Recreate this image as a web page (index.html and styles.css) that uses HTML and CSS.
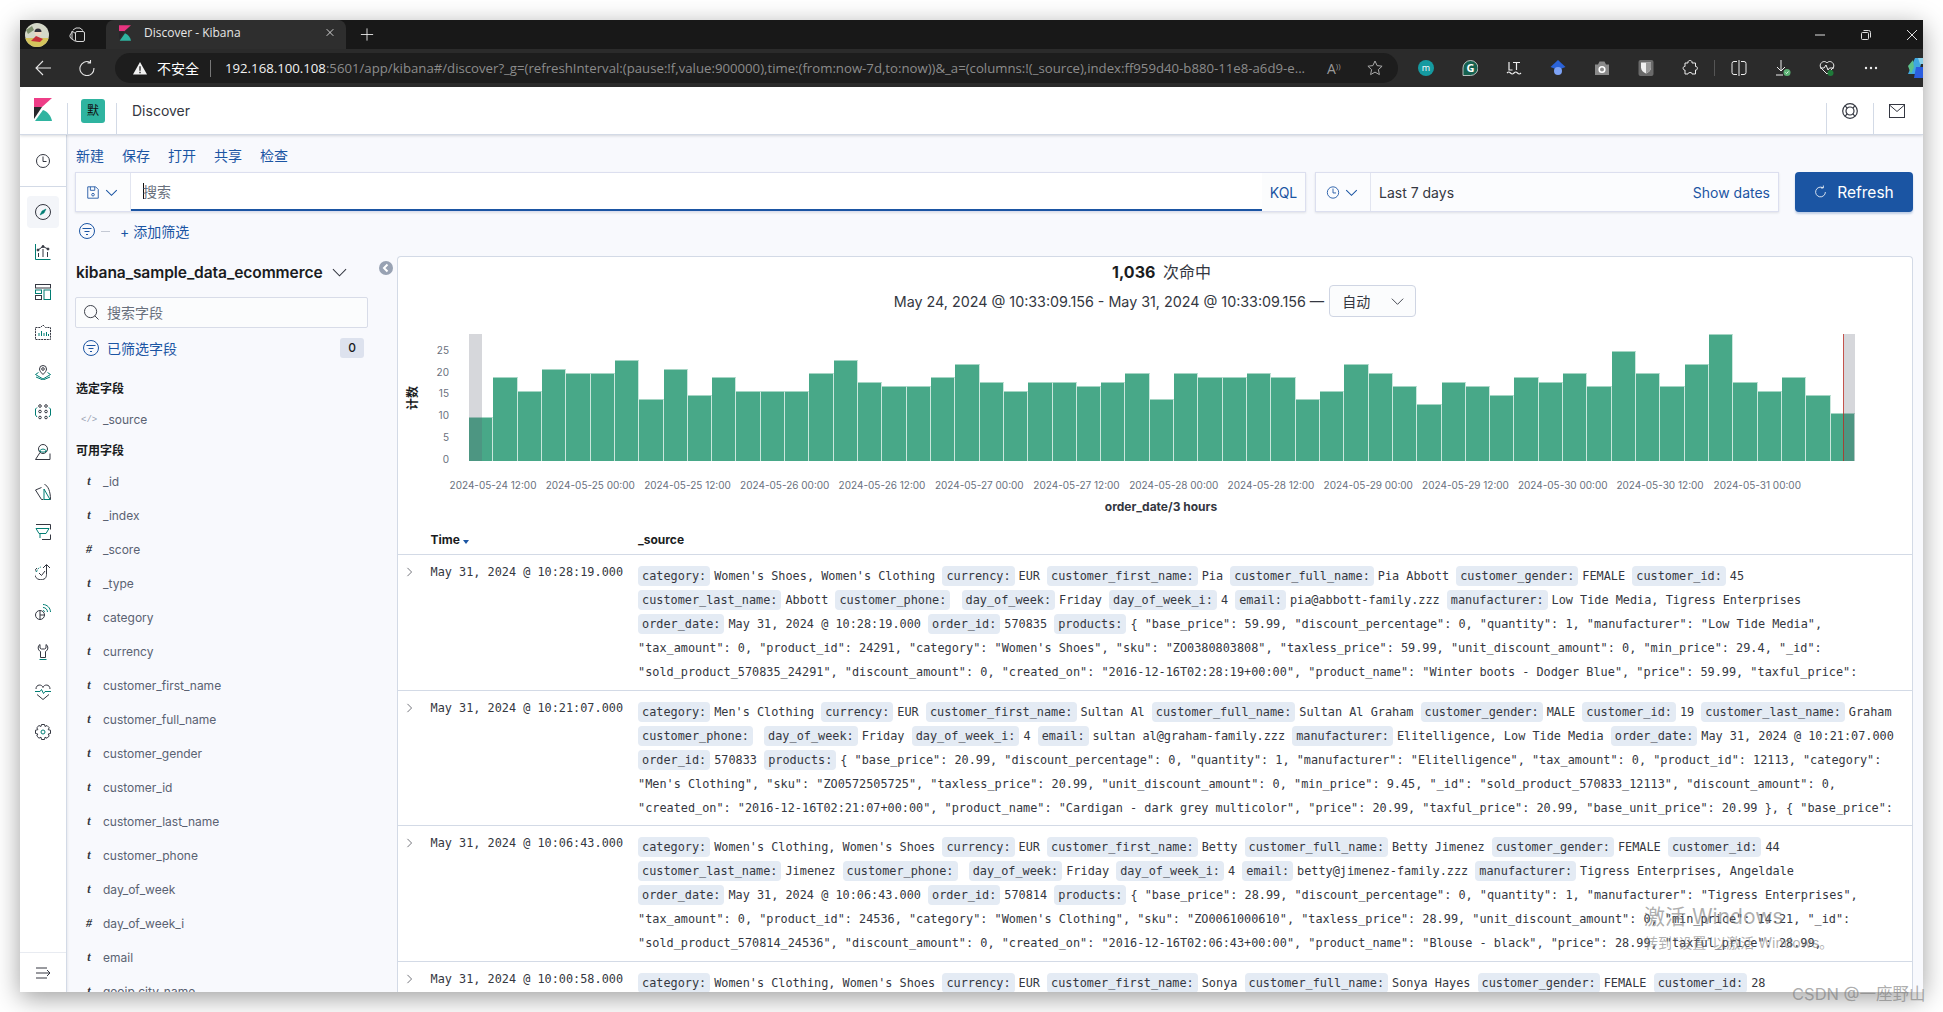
FILE: index.html
```html
<!DOCTYPE html>
<html lang="zh">
<head>
<meta charset="utf-8">
<title>Discover - Kibana</title>
<link rel="stylesheet" href="styles.css">
</head>
<body>
<div class="window">
  <div class="tabstrip">
    <svg class="avatar" viewBox="0 0 24 24"><defs><clipPath id="av"><ellipse cx="12" cy="12" rx="12" ry="12"/></clipPath></defs><g clip-path="url(#av)"><rect width="24" height="24" fill="#d4d8c8"/><rect y="15" width="24" height="9" fill="#d4c45c"/><circle cx="13" cy="9" r="3.500" fill="#f0d6c0"/><path d="M13 5.500a3.500 3.500 0 0 1 3.500 3.500h-7a3.500 3.500 0 0 1 3.500-3.500z" fill="#30303a"/><path d="M6 18l5-5 7 3-3 3z" fill="#c62f3a"/><path d="M1 7l6-4 2 4-6 4z" fill="#7d8f6c"/></g></svg>
    <svg class="tsicon" viewBox="0 0 16 16" fill="none" stroke="#d8d8d8"><rect x="6.500" y="4.500" width="9" height="10" rx="1.500"/><path d="M6.500 14.500L3 12V4l3.500 2.500M3.500 4.500L1 8v2l2 2.500M4 3l3-2h4l3 2.500"/></svg>
    <div class="tab">
      <svg class="favicon" viewBox="0 0 18 23"><polygon points="0,0 18,0 8,9 0,9" fill="#e8347f"/><polygon points="0,9 8,9 0,21" fill="#27282b"/><path d="M9 12C14 14 17 18 18 23H1z" fill="#2fb4a0"/></svg>
      <span class="tabtitle">Discover - Kibana</span>
      <svg class="tabclose" viewBox="0 0 12 12" stroke="#eee" fill="none"><path d="M2 2l8 8M10 2l-8 8"/></svg>
    </div>
    <svg class="newtab" viewBox="0 0 16 16" stroke="#eee" fill="none"><path d="M8 1v14M1 8h14"/></svg>
    <div class="winctl">
      <svg viewBox="0 0 12 12" stroke="#ddd" fill="none"><path d="M1 6h10"/></svg>
      <svg viewBox="0 0 12 12" stroke="#ddd" fill="none"><rect x="1.500" y="3.500" width="7" height="7" rx="1"/><path d="M3.500 1.500h5a2 2 0 0 1 2 2v5"/></svg>
      <svg viewBox="0 0 12 12" stroke="#ddd" fill="none"><path d="M1 1l10 10M11 1L1 11"/></svg>
    </div>
  </div>
  <div class="toolbar">
    <svg class="navbtn" viewBox="0 0 16 16" fill="none" stroke="#e6e6e6" stroke-width="1.100"><path d="M16 8H1M8 1L1 8l7 7"/></svg>
    <svg class="navbtn" viewBox="0 0 16 16" fill="none" stroke="#e6e6e6" stroke-width="1.100"><path d="M11 2.300A7 7 0 1 0 14.900 8M11.500 0v3h-3"/></svg>
    <div class="addr">
      <svg class="warn" viewBox="0 0 16 16"><path d="M8 1l7.500 13.500H.5z" fill="#f2f2f2"/><path d="M7.300 5.500h1.400v5H7.300zM7.300 11.500h1.400v1.500H7.300z" fill="#222"/></svg>
      <span class="insecure">不安全</span>
      <span class="addrsep"></span>
      <span class="url"><b>192.168.100.108</b>:5601/app/kibana#/discover?_g=(refreshInterval:(pause:!f,value:900000),time:(from:now-7d,to:now))&amp;_a=(columns:!(_source),index:ff959d40-b880-11e8-a6d9-e...</span>
      <span class="readaloud">A<small>))</small></span>
      <svg class="star" viewBox="0 0 16 16" fill="none" stroke="#aaa"><path d="M8 1l2.100 4.600 5 .6-3.700 3.400 1 5L8 12.100l-4.400 2.500 1-5L.9 6.200l5-.6z"/></svg>
    </div>
    <div class="exts">
      <span class="ext"><svg viewBox="0 0 16 16"><circle cx="8" cy="8" r="8" fill="#159aa0"/><text x="8" y="11" class="extm">m</text></svg></span>
      <span class="ext"><svg viewBox="0 0 16 16"><path d="M8.500 .5a7.500 7.500 0 0 1 0 15H1V8A7.500 7.500 0 0 1 8.500 .5z" fill="#15614f" stroke="#ddd" stroke-width=".8"/><text x="8.500" y="12" class="extg">G</text></svg></span>
      <span class="ext"><svg viewBox="0 0 16 16" fill="none" stroke="#eee" stroke-width="1.200"><path d="M3 2v8h3.500M7 2.500h7M10.500 2.500v7.500M1 13c1.500-1.500 2-1.500 3.500 0s2 1.500 3.500 0 2-1.500 3.500 0 2 1.500 3.500 0"/></svg></span>
      <span class="ext"><svg viewBox="0 0 16 16"><path d="M8 0l7.500 7L8 10 .5 7z" fill="#2b63d9"/><circle cx="8" cy="11" r="4" fill="#7da2f5"/></svg></span>
      <span class="ext"><svg viewBox="0 0 16 16"><path d="M1 4.500h3l1.500-3h5L12 4.500h3V15H1z" fill="#8a8a8a"/><circle cx="8" cy="9.500" r="2.800" fill="none" stroke="#fff" stroke-width="1.600"/></svg></span>
      <span class="ext"><svg viewBox="0 0 16 16"><rect x="0.500" y="0" width="15" height="16" rx="2" fill="#6a6a6a"/><path d="M3 2.500h10v5c0 3-2.500 5-5 6-2.500-1-5-3-5-6z" fill="#f0f0f0"/><path d="M8 2.500h5v5c0 3-2.500 5-5 6z" fill="#9a9a9a"/></svg></span>
      <span class="ext"><svg viewBox="0 0 16 16" fill="none" stroke="#eee"><path d="M6 2c0-2 4-2 4 0v1h3.500v3.500c2.500-.5 2.500 4 0 3.500v4H10c.5-2-4-2-4 0H3v-4C.5 10.500.5 6 3 6.500V3h3z"/></svg></span>
      <span class="extsep"></span>
      <span class="ext"><svg viewBox="0 0 16 16" fill="none" stroke="#eee"><path d="M6 1.500H3a2 2 0 0 0-2 2v9a2 2 0 0 0 2 2h3M10 1.500h3a2 2 0 0 1 2 2v9a2 2 0 0 1-2 2h-3M8 0v16"/></svg></span>
      <span class="ext"><svg viewBox="0 0 16 16" fill="none"><path d="M6 0v11M2 7l4 4 4-4M1 15h7" stroke="#eee"/><circle cx="12" cy="12.500" r="3.500" fill="#5cb274"/><path d="M10.500 12.500l1 1 2-2" stroke="#fff" stroke-width=".8"/></svg></span>
      <span class="ext"><svg viewBox="0 0 16 16" fill="none"><path d="M8 14L2 8C-1 4 5-1 8 3c3-4 9 1 6 5z" stroke="#eee"/><path d="M1 8h4l2-3 2 5 1.500-2H15" stroke="#eee"/><circle cx="11.500" cy="13" r="3" fill="#1f7a3a"/></svg></span>
      <span class="ext"><svg viewBox="0 0 16 16" fill="#eee"><circle cx="3" cy="8" r="1.200"/><circle cx="8" cy="8" r="1.200"/><circle cx="13" cy="8" r="1.200"/></svg></span>
      <span class="ext copilot"><svg viewBox="0 0 22 20"><path d="M8 0h8l-5 16H1z" fill="#3fa7e0"/><path d="M11 0h6l2 6-6 0z" fill="#8ad0e8"/><path d="M9 9h9l4 2-5 9H7z" fill="#2b5ee0"/><path d="M1 8l5-6 1 7-3 7z" fill="#5cc18a"/></svg></span>
    </div>
  </div>

  <header class="kbnhead">
    <div class="kbnlogo">
      <svg viewBox="0 0 18 23"><polygon points="0,0 18,0 8,9 0,9" fill="#ee3d87"/><polygon points="0,9 8,9 0,21" fill="#27282b"/><path d="M9 12C14 14 17 18 18 23H1z" fill="#2fb4a0"/></svg>
    </div>
    <div class="kbnspace"><span class="spacebadge">默</span></div>
    <div class="kbncrumb">Discover</div>
    <div class="kbnhelp">
      <svg viewBox="0 0 16 16" fill="none" stroke="#343741" stroke-width="1.200"><circle cx="8" cy="8" r="7.300"/><circle cx="8" cy="8" r="4"/><path d="M3 2.500l2.200 2.800M13 2.500l-2.200 2.800M3 13.500l2.200-2.800M13 13.500l-2.200-2.800"/></svg>
    </div>
    <div class="kbnmail">
      <svg viewBox="0 0 16 16" fill="none" stroke="#343741"><rect x=".5" y="1.500" width="15" height="13"/><path d="M.5 2L8 8.500 15.500 2"/></svg>
    </div>
  </header>

  <div class="kbnbody">
    <nav class="sidenav">
      <div class="navitem recent"><svg viewBox="0 0 16 16" fill="none" stroke="#343741"><circle cx="8" cy="8" r="6.500"/><path d="M8 3.500V8.500H11.500"/></svg></div>
      <div class="navitem active"><svg viewBox="0 0 16 16" fill="none" stroke="#343741"><circle cx="8" cy="8" r="7.500"/><path d="M11 5L9 9 5 11l2-4z" fill="#017d73" stroke="#017d73" stroke-width=".5"/></svg></div>
      <div class="navitem"><svg viewBox="0 0 16 16" fill="none" stroke="#343741"><path d="M.5 0v15.500" stroke="#017d73"/><path d="M.5 15.500h15" stroke="#017d73"/><path d="M3.500 13V9M8 13V5M12.500 13V8"/><path d="M3 6l5-3.500L13 5"/><circle cx="3" cy="6" r="1" fill="#343741"/><circle cx="8" cy="2.500" r="1" fill="#343741"/><circle cx="13" cy="5" r="1" fill="#343741"/></svg></div>
      <div class="navitem"><svg viewBox="0 0 16 16" fill="none" stroke="#343741"><rect x=".5" y=".5" width="15" height="3.500"/><rect x=".5" y="6" width="6" height="3.500" stroke="#017d73"/><rect x=".5" y="11.500" width="6" height="4"/><rect x="9" y="6" width="6.500" height="9.500" stroke="#017d73"/></svg></div>
      <div class="navitem"><svg viewBox="0 0 16 16" fill="none" stroke="#343741"><path d="M.5 3.500h5L8 1l2.500 2.500h5v12H.5z" stroke-dasharray="2 .8"/><path d="M4 12V9M6.500 12V7M9 12V9M11.500 12V8M13.500 12v-2" stroke="#017d73"/></svg></div>
      <div class="navitem"><svg viewBox="0 0 16 16" fill="none" stroke="#343741"><path d="M8 10.500C5.500 8 4.500 6.500 4.500 5a3.500 3.500 0 0 1 7 0c0 1.500-1 3-3.500 5.500z"/><circle cx="8" cy="5" r="1.300"/><path d="M3.500 8.500L0.500 10.500 8 15l7.500-4.500-3-2M1 13l7 3 7-3" stroke="#017d73"/></svg></div>
      <div class="navitem"><svg viewBox="0 0 16 16" fill="none" stroke="#343741"><circle cx="5" cy="2" r="1.300"/><circle cx="11" cy="2" r="1.300"/><circle cx="5" cy="7.500" r="1.300"/><circle cx="11" cy="7.500" r="1.300"/><circle cx="5" cy="13.500" r="1.300"/><circle cx="11" cy="13.500" r="1.300"/><path d="M2 3.500L.5 5v6L2 13M14 3.500L15.500 5v6L14 13" stroke="#017d73"/></svg></div>
      <div class="navitem"><svg viewBox="0 0 16 16" fill="none" stroke="#343741"><circle cx="8" cy="5" r="4.500"/><path d="M5 8.500L.5 15.500h14.500v-6"/><path d="M4.500 7c2-2.500 5-2.500 7 0-2 1.500-5 1.500-7 0z" stroke="#017d73"/></svg></div>
      <div class="navitem"><svg viewBox="0 0 16 16" fill="none" stroke="#343741"><path d="M.5 6L6.500 3.500M.5 6l6 9.500h2M9.500 .5c3.500 1 6 7 6 15H9.500"/><path d="M9 5l6 10.500H9z" stroke="#017d73"/></svg></div>
      <div class="navitem"><svg viewBox="0 0 16 16" fill="none" stroke="#343741"><path d="M1 .5h14.500v5M7 15.500h8.500v-5"/><path d="M1 4.500h13L11 9.500H4zM5 10v4" stroke="#017d73"/></svg></div>
      <div class="navitem"><svg viewBox="0 0 16 16" fill="none" stroke="#343741"><path d="M2 4a6.500 6.500 0 1 0 8 10.500c1-1 1.500-2.500 1.500-4V1"/><path d="M8 4l3.500-3.500L15 4"/><path d="M1.500 8A6.500 6.500 0 0 1 6 3" stroke="#017d73" stroke-dasharray="2 1"/><path d="M4 9l2.500 2.500L10 7"/></svg></div>
      <div class="navitem"><svg viewBox="0 0 16 16" fill="none" stroke="#343741"><circle cx="5" cy="11" r="4.500"/><path d="M5 6.500V11h4.500M5 11v4.500"/><path d="M8 .5c4 0 7.500 3.500 7.500 7.500M8 3.500c2.500 0 4.500 2 4.500 4.500M8 6.500c1 0 1.500.5 1.500 1.500" stroke="#017d73"/></svg></div>
      <div class="navitem"><svg viewBox="0 0 16 16" fill="none" stroke="#343741"><path d="M5 .5C2.500 2 2.500 6 5.500 7.500v6h5v-6C13.500 6 13.500 2 11 .5v3.500L9.500 5h-3L5 4z"/><path d="M4.500 15.500h7" stroke="#017d73"/></svg></div>
      <div class="navitem"><svg viewBox="0 0 16 16" fill="none" stroke="#343741"><path d="M1 5c0-5 6-5 7-1.500C9 0 15 0 15 5M2 10.500l6 5 6-5"/><path d="M0 7.500h5l1.500-2 2 4 1.500-2h6" stroke="#017d73"/></svg></div>
      <div class="navitem"><svg viewBox="0 0 16 16" fill="none" stroke="#343741"><path d="M6.500.5h3l.5 2 2-1 2.200 2.200-1 2 2.300.5v3.300l-2.300.5 1 2-2.200 2.200-2-1-.5 2.300h-3l-.5-2.300-2 1-2.200-2.200 1-2L.5 9.500V6.200l2.300-.5-1-2L4 1.500l2 1z"/><circle cx="8" cy="8" r="2" stroke="#017d73"/></svg></div>
      <div class="navfoot"><svg viewBox="0 0 16 16" fill="none" stroke="#343741"><path d="M1 3h11M1 8h14M1 13h11M12 5l3 3-3 3"/></svg></div>
    </nav>

    <main class="content">
      <div class="topmenu"><span>新建</span><span>保存</span><span>打开</span><span>共享</span><span>检查</span></div>
      <div class="querybar">
        <div class="query">
          <div class="qprepend">
            <svg viewBox="0 0 16 16" fill="none" stroke="#1b55a3"><path d="M2 1.500h9l3 3v10H2z"/><path d="M5 1.500v4h5v-4"/><circle cx="8" cy="10.500" r="1.500"/></svg>
            <svg class="chev" viewBox="0 0 16 16" fill="none" stroke="#1b55a3" stroke-width="1.300"><path d="M1.500 5l6.500 6.500L14.500 5"/></svg>
          </div>
          <div class="qinput"><i class="caret"></i><span>搜索</span></div>
          <div class="qlang">KQL</div>
        </div>
        <div class="datepicker">
          <div class="qprepend">
            <svg viewBox="0 0 16 16" fill="none" stroke="#1b55a3"><circle cx="8" cy="8" r="6.500"/><path d="M8 3.500V8.500H11.500"/></svg>
            <svg class="chev" viewBox="0 0 16 16" fill="none" stroke="#1b55a3" stroke-width="1.300"><path d="M1.500 5l6.500 6.500L14.500 5"/></svg>
          </div>
          <div class="dateval">Last 7 days</div>
          <div class="showdates">Show dates</div>
        </div>
        <button class="refresh"><svg viewBox="0 0 16 16" fill="none" stroke="#fff"><path d="M11 2.800A6 6 0 1 0 14 8M11.500 0v3h-3"/></svg>Refresh</button>
      </div>
      <div class="filterbar">
        <svg viewBox="0 0 16 16" fill="none" stroke="#1b55a3"><circle cx="8" cy="8" r="7.500"/><path d="M3.500 5.500h9M5.500 8.500h5M7 11.500h2"/></svg>
        <i class="filterdash"></i>
        <span>+ 添加筛选</span>
      </div>

      <div class="discover">
        <aside class="fields">
          <div class="indexrow">
            <span class="indexname">kibana_sample_data_ecommerce</span>
            <svg class="indexchev" viewBox="0 0 16 16" fill="none" stroke="#343741" stroke-width="1.100"><path d="M1 4.500l7 7 7-7"/></svg>
            <span class="collapse"><svg viewBox="0 0 14 14" fill="none" stroke="#fff" stroke-width="2"><path d="M8.500 3.500L5 7l3.500 3.500"/></svg></span>
          </div>
          <div class="fieldsearch">
            <svg viewBox="0 0 16 16" fill="none" stroke="#343741"><circle cx="7" cy="7" r="6.500"/><path d="M11.500 11.500l4 4"/></svg>
            <span>搜索字段</span>
          </div>
          <div class="filterfields">
            <svg viewBox="0 0 16 16" fill="none" stroke="#1b55a3"><circle cx="8" cy="8" r="7.500"/><path d="M3.500 5.500h9M5.500 8.500h5M7 11.500h2"/></svg>
            <span class="ffl">已筛选字段</span>
            <span class="ffbadge">0</span>
          </div>
          <h3 class="fhead first">选定字段</h3>
          <div class="field src"><span class="ftype code">&lt;/&gt;</span>_source</div>
          <h3 class="fhead second">可用字段</h3>
          <div class="fieldlist">
            <div class="field"><span class="ftype">t</span>_id</div>
            <div class="field"><span class="ftype">t</span>_index</div>
            <div class="field"><span class="ftype">#</span>_score</div>
            <div class="field"><span class="ftype">t</span>_type</div>
            <div class="field"><span class="ftype">t</span>category</div>
            <div class="field"><span class="ftype">t</span>currency</div>
            <div class="field"><span class="ftype">t</span>customer_first_name</div>
            <div class="field"><span class="ftype">t</span>customer_full_name</div>
            <div class="field"><span class="ftype">t</span>customer_gender</div>
            <div class="field"><span class="ftype">t</span>customer_id</div>
            <div class="field"><span class="ftype">t</span>customer_last_name</div>
            <div class="field"><span class="ftype">t</span>customer_phone</div>
            <div class="field"><span class="ftype">t</span>day_of_week</div>
            <div class="field"><span class="ftype">#</span>day_of_week_i</div>
            <div class="field"><span class="ftype">t</span>email</div>
            <div class="field"><span class="ftype">t</span>geoip.city_name</div>
          </div>
        </aside>

        <section class="results">
          <div class="hits"><b>1,036</b> 次命中</div>
          <div class="timerange">
            <span>May 24, 2024 @ 10:33:09.156 - May 31, 2024 @ 10:33:09.156 —</span>
            <span class="interval">自动<svg viewBox="0 0 16 16" fill="none" stroke="#343741" stroke-width="1.100"><path d="M1 4.500l7 7 7-7"/></svg></span>
          </div>
          <div class="chart">
            <div class="yaxis">
              <span class="ytitle">计数</span>
              <div class="yticks"><span>0</span><span>5</span><span>10</span><span>15</span><span>20</span><span>25</span></div>
            </div>
            <div class="plot">
              <i style="height:44px"></i><i style="height:83.600px"></i><i style="height:70.400px"></i><i style="height:92.400px"></i><i style="height:88px"></i><i style="height:88px"></i><i style="height:101.200px"></i><i style="height:61.600px"></i><i style="height:92.400px"></i><i style="height:66px"></i><i style="height:83.600px"></i><i style="height:70.400px"></i><i style="height:70.400px"></i><i style="height:70.400px"></i><i style="height:88px"></i><i style="height:101.200px"></i><i style="height:79.200px"></i><i style="height:74.800px"></i><i style="height:74.800px"></i><i style="height:83.600px"></i><i style="height:96.800px"></i><i style="height:79.200px"></i><i style="height:70.400px"></i><i style="height:79.200px"></i><i style="height:79.200px"></i><i style="height:74.800px"></i><i style="height:79.200px"></i><i style="height:88px"></i><i style="height:61.600px"></i><i style="height:88px"></i><i style="height:83.600px"></i><i style="height:83.600px"></i><i style="height:88px"></i><i style="height:83.600px"></i><i style="height:61.600px"></i><i style="height:70.400px"></i><i style="height:96.800px"></i><i style="height:88px"></i><i style="height:74.800px"></i><i style="height:57.200px"></i><i style="height:79.200px"></i><i style="height:74.800px"></i><i style="height:66px"></i><i style="height:83.600px"></i><i style="height:79.200px"></i><i style="height:88px"></i><i style="height:74.800px"></i><i style="height:110px"></i><i style="height:88px"></i><i style="height:74.800px"></i><i style="height:96.800px"></i><i style="height:127px"></i><i style="height:79.200px"></i><i style="height:70.400px"></i><i style="height:83.600px"></i><i style="height:66px"></i><i style="height:48.400px"></i>
              <b class="bound left"></b>
              <b class="bound right"></b>
              <b class="nowline"></b>
            </div>
            <div class="xticks"><span>2024-05-24 12:00</span><span>2024-05-25 00:00</span><span>2024-05-25 12:00</span><span>2024-05-26 00:00</span><span>2024-05-26 12:00</span><span>2024-05-27 00:00</span><span>2024-05-27 12:00</span><span>2024-05-28 00:00</span><span>2024-05-28 12:00</span><span>2024-05-29 00:00</span><span>2024-05-29 12:00</span><span>2024-05-30 00:00</span><span>2024-05-30 12:00</span><span>2024-05-31 00:00</span></div>
            <div class="xtitle">order_date/3 hours</div>
          </div>
          <div class="thead"><span class="thtime">Time<i class="sortarrow"></i></span><span class="thsrc">_source</span></div>

          <article class="row">
            <svg class="expand" viewBox="0 0 16 16" fill="none" stroke="#343741"><path d="M5 2l6 6-6 6"/></svg>
            <div class="rtime">May 31, 2024 @ 10:28:19.000</div>
            <div class="src">
              <div><span class="k">category:</span><span class="v">Women's Shoes, Women's Clothing</span> <span class="k">currency:</span><span class="v">EUR</span> <span class="k">customer_first_name:</span><span class="v">Pia</span> <span class="k">customer_full_name:</span><span class="v">Pia Abbott</span> <span class="k">customer_gender:</span><span class="v">FEMALE</span> <span class="k">customer_id:</span><span class="v">45</span></div>
              <div><span class="k">customer_last_name:</span><span class="v">Abbott</span> <span class="k">customer_phone:</span><span class="v"></span> <span class="k">day_of_week:</span><span class="v">Friday</span> <span class="k">day_of_week_i:</span><span class="v">4</span> <span class="k">email:</span><span class="v">pia@abbott-family.zzz</span> <span class="k">manufacturer:</span><span class="v">Low Tide Media, Tigress Enterprises</span></div>
              <div><span class="k">order_date:</span><span class="v">May 31, 2024 @ 10:28:19.000</span> <span class="k">order_id:</span><span class="v">570835</span> <span class="k">products:</span><span class="v">{ "base_price": 59.99, "discount_percentage": 0, "quantity": 1, "manufacturer": "Low Tide Media",</span></div>
              <div>"tax_amount": 0, "product_id": 24291, "category": "Women's Shoes", "sku": "ZO0380803808", "taxless_price": 59.99, "unit_discount_amount": 0, "min_price": 29.4, "_id":</div>
              <div>"sold_product_570835_24291", "discount_amount": 0, "created_on": "2016-12-16T02:28:19+00:00", "product_name": "Winter boots - Dodger Blue", "price": 59.99, "taxful_price":</div>
            </div>
          </article>
          <article class="row">
            <svg class="expand" viewBox="0 0 16 16" fill="none" stroke="#343741"><path d="M5 2l6 6-6 6"/></svg>
            <div class="rtime">May 31, 2024 @ 10:21:07.000</div>
            <div class="src">
              <div><span class="k">category:</span><span class="v">Men's Clothing</span> <span class="k">currency:</span><span class="v">EUR</span> <span class="k">customer_first_name:</span><span class="v">Sultan Al</span> <span class="k">customer_full_name:</span><span class="v">Sultan Al Graham</span> <span class="k">customer_gender:</span><span class="v">MALE</span> <span class="k">customer_id:</span><span class="v">19</span> <span class="k">customer_last_name:</span><span class="v">Graham</span></div>
              <div><span class="k">customer_phone:</span><span class="v"></span> <span class="k">day_of_week:</span><span class="v">Friday</span> <span class="k">day_of_week_i:</span><span class="v">4</span> <span class="k">email:</span><span class="v">sultan al@graham-family.zzz</span> <span class="k">manufacturer:</span><span class="v">Elitelligence, Low Tide Media</span> <span class="k">order_date:</span><span class="v">May 31, 2024 @ 10:21:07.000</span></div>
              <div><span class="k">order_id:</span><span class="v">570833</span> <span class="k">products:</span><span class="v">{ "base_price": 20.99, "discount_percentage": 0, "quantity": 1, "manufacturer": "Elitelligence", "tax_amount": 0, "product_id": 12113, "category":</span></div>
              <div>"Men's Clothing", "sku": "ZO0572505725", "taxless_price": 20.99, "unit_discount_amount": 0, "min_price": 9.45, "_id": "sold_product_570833_12113", "discount_amount": 0,</div>
              <div>"created_on": "2016-12-16T02:21:07+00:00", "product_name": "Cardigan - dark grey multicolor", "price": 20.99, "taxful_price": 20.99, "base_unit_price": 20.99 }, { "base_price":</div>
            </div>
          </article>
          <article class="row">
            <svg class="expand" viewBox="0 0 16 16" fill="none" stroke="#343741"><path d="M5 2l6 6-6 6"/></svg>
            <div class="rtime">May 31, 2024 @ 10:06:43.000</div>
            <div class="src">
              <div><span class="k">category:</span><span class="v">Women's Clothing, Women's Shoes</span> <span class="k">currency:</span><span class="v">EUR</span> <span class="k">customer_first_name:</span><span class="v">Betty</span> <span class="k">customer_full_name:</span><span class="v">Betty Jimenez</span> <span class="k">customer_gender:</span><span class="v">FEMALE</span> <span class="k">customer_id:</span><span class="v">44</span></div>
              <div><span class="k">customer_last_name:</span><span class="v">Jimenez</span> <span class="k">customer_phone:</span><span class="v"></span> <span class="k">day_of_week:</span><span class="v">Friday</span> <span class="k">day_of_week_i:</span><span class="v">4</span> <span class="k">email:</span><span class="v">betty@jimenez-family.zzz</span> <span class="k">manufacturer:</span><span class="v">Tigress Enterprises, Angeldale</span></div>
              <div><span class="k">order_date:</span><span class="v">May 31, 2024 @ 10:06:43.000</span> <span class="k">order_id:</span><span class="v">570814</span> <span class="k">products:</span><span class="v">{ "base_price": 28.99, "discount_percentage": 0, "quantity": 1, "manufacturer": "Tigress Enterprises",</span></div>
              <div>"tax_amount": 0, "product_id": 24536, "category": "Women's Clothing", "sku": "ZO0061000610", "taxless_price": 28.99, "unit_discount_amount": 0, "min_price": 14.21, "_id":</div>
              <div>"sold_product_570814_24536", "discount_amount": 0, "created_on": "2016-12-16T02:06:43+00:00", "product_name": "Blouse - black", "price": 28.99, "taxful_price": 28.99,</div>
            </div>
          </article>
          <article class="row">
            <svg class="expand" viewBox="0 0 16 16" fill="none" stroke="#343741"><path d="M5 2l6 6-6 6"/></svg>
            <div class="rtime">May 31, 2024 @ 10:00:58.000</div>
            <div class="src">
              <div><span class="k">category:</span><span class="v">Women's Clothing, Women's Shoes</span> <span class="k">currency:</span><span class="v">EUR</span> <span class="k">customer_first_name:</span><span class="v">Sonya</span> <span class="k">customer_full_name:</span><span class="v">Sonya Hayes</span> <span class="k">customer_gender:</span><span class="v">FEMALE</span> <span class="k">customer_id:</span><span class="v">28</span></div>
            </div>
          </article>
        </section>
      </div>
    </main>
  </div>
</div>
<div class="activate"><div class="act1">激活 Windows</div><div class="act2">转到“设置”以激活 Windows。</div></div>
<div class="csdn">CSDN @一座野山</div>
</body>
</html>
```

FILE: styles.css
```css
* { box-sizing: border-box; }
html, body { margin: 0; padding: 0; }
body {
  width: 1943px;
  height: 1012px;
  overflow: hidden;
  background: #fff;
  position: relative;
  font-family: Inter, "Noto Sans CJK SC", sans-serif;
  color: #343741;
}
svg { display: block; flex: none; }
i, b.bound, b.nowline { display: block; }

.window {
  position: absolute;
  left: 20px;
  top: 20px;
  width: 1903px;
  height: 972px;
  display: flex;
  flex-direction: column;
  overflow: hidden;
  background: #fff;
}
body::before {
  content: "";
  position: absolute;
  left: 20px;
  top: 20px;
  width: 1903px;
  height: 972px;
  box-shadow: 0 6px 24px rgba(0,0,0,.38);
}

/* browser chrome */
.tabstrip {
  height: 29px;
  flex: none;
  background: #181818;
  display: flex;
  align-items: center;
  padding-left: 5px;
}
.avatar { width: 24px; height: 26px; }
.tsicon { width: 16px; height: 18px; margin-left: 20px; }
.tab {
  width: 240px;
  height: 29px;
  margin-left: 21px;
  background: #2e2e2e;
  border-radius: 8px 8px 0 0;
  display: flex;
  align-items: center;
  padding: 0 0 4px 13px;
  color: #e6e6e6;
  font: 12px "Open Sans", "Noto Sans CJK SC", sans-serif;
}
.favicon { width: 12px; height: 16px; }
.tabtitle { margin-left: 13px; width: 181px; white-space: nowrap; }
.tabclose { width: 10px; height: 11px; }
.newtab { width: 14px; height: 15px; margin-left: 14px; }
.winctl { margin-left: auto; display: flex; align-items: center; }
.winctl svg { width: 12px; height: 12px; margin-right: 34px; }
.winctl svg:last-child { margin-right: 5px; }

.toolbar {
  height: 38px;
  flex: none;
  background: #2b2b2b;
  display: flex;
  align-items: center;
  padding-left: 15px;
}
.navbtn { width: 16px; height: 16px; margin-right: 28px; }
.navbtn + .navbtn { margin-right: 20px; }
.addr {
  width: 1283px;
  height: 30px;
  background: #1d1d1d;
  border-radius: 15px;
  display: flex;
  align-items: center;
  padding-left: 17px;
  flex: none;
  color: #fff;
  font: 13.200px "Open Sans", "Noto Sans CJK SC", sans-serif;
}
.warn { width: 16px; height: 15px; }
.insecure { margin-left: 9px; width: 43px; font-size: 14px; white-space: nowrap; }
.addrsep { width: 1px; height: 17px; background: #777; margin-left: 10px; }
.url {
  margin-left: 14px;
  width: 1090px;
  white-space: nowrap;
  color: #8c8c8c;
}
.url b { color: #f2f2f2; font-weight: 400; }
.readaloud { margin-left: 12px; color: #9a9a9a; font-size: 14px; width: 20px; white-space: nowrap; }
.readaloud small { font-size: 8px; vertical-align: 5px; }
.star { width: 16px; height: 16px; margin-left: 20px; }
.exts { display: flex; align-items: center; margin-left: 6px; }
.ext { width: 44px; display: flex; justify-content: center; }
.ext svg { width: 16px; height: 16px; }
.extm { font: 9px "Open Sans", sans-serif; fill: #fff; text-anchor: middle; }
.extg { font: bold 11px "Open Sans", sans-serif; fill: #fff; text-anchor: middle; }
.extsep { width: 1px; height: 16px; background: #555; margin: 0 2px 0 2px; }
.copilot { width: 36px; justify-content: flex-end; }
.copilot svg { width: 22px; height: 20px; }

/* kibana header */
.kbnhead {
  height: 48px;
  flex: none;
  display: flex;
  background: #fff;
  position: relative;
  z-index: 2;
  border-bottom: 1px solid #d3dae6;
  box-shadow: 0 1px 3px rgba(52,55,65,.18);
  border-radius: 5px 5px 0 0;
}
.kbnlogo {
  width: 47px;
  padding: 11px 0 0 14px;
}
.kbnlogo svg { width: 18px; height: 23px; }
.kbnspace {
  width: 49px;
  padding-left: 13px;
  border-left: 1px solid #d3dae6;
  margin-top: 16px;
  height: 31px;
}
.spacebadge {
  display: block;
  width: 24px;
  height: 24px;
  margin-top: -4px;
  background: #2fb4a0;
  border-radius: 3px;
  color: #111;
  font-size: 12px;
  line-height: 24px;
  text-align: center;
}
.kbncrumb {
  flex: 1;
  border-left: 1px solid #d3dae6;
  margin-top: 16px;
  padding-left: 15px;
  font-size: 14px;
  line-height: 16px;
}
.kbnhelp, .kbnmail {
  border-left: 1px solid #d3dae6;
  margin-top: 16px;
  width: 47px;
  display: flex;
  justify-content: center;
}
.kbnhelp svg, .kbnmail svg { width: 16px; height: 16px; }
.kbnmail { width: 50px; padding-right: 3px; }

.kbnbody { flex: 1; min-height: 0; display: flex; }

/* side nav */
.sidenav {
  width: 47px;
  flex: none;
  background: #fff;
  border-right: 1px solid #d3dae6;
  box-shadow: 1px 0 2px rgba(52,55,65,.08);
  position: relative;
  padding-top: 6px;
  display: flex;
  flex-direction: column;
  z-index: 1;
}
.navitem {
  height: 40px;
  display: flex;
  align-items: center;
  justify-content: center;
  flex: none;
}
.navitem svg { width: 16px; height: 16px; }
.navitem.recent { height: 46px; padding-bottom: 6px; border-bottom: 1px solid #d3dae6; }
.navitem.active { height: 32px; margin: 9px 7px 4px 7px; background: #f3f5f9; border-radius: 4px; }
.navfoot {
  margin-top: auto;
  height: 40px;
  border-top: 1px solid #e8ebf1;
  display: flex;
  align-items: center;
  justify-content: center;
}
.navfoot svg { width: 16px; height: 16px; }

/* content */
.content {
  flex: 1;
  min-width: 0;
  background: #f8f9fd;
  display: flex;
  flex-direction: column;
}
.topmenu {
  height: 37px;
  flex: none;
  padding: 9px 0 0 9px;
  display: flex;
  gap: 18px;
  font-size: 14px;
  line-height: 24px;
  color: #1b55a3;
}
.querybar {
  height: 40px;
  flex: none;
  margin: 0 10px 0 8px;
  display: flex;
}
.query {
  width: 1231px;
  display: flex;
  background: #fbfcfd;
  border: 1px solid #dcdfef;
  box-shadow: 0 1px 2px rgba(52,55,65,.12);
}
.qprepend {
  width: 55px;
  flex: none;
  display: flex;
  align-items: center;
  padding-left: 10px;
  gap: 5px;
  color: #1b55a3;
  border-right: 1px solid #e2e5f0;
}
.qprepend svg { width: 14px; height: 15px; }
.qprepend svg.chev { width: 13px; height: 13px; }
.qinput {
  flex: 1;
  background: #fff;
  border-bottom: 2px solid #1b55a3;
  display: flex;
  align-items: center;
  padding-left: 12px;
  font-size: 14px;
  color: #69707d;
}
.caret { width: 1px; height: 16px; background: #111; margin-right: -1px; }
.qlang {
  width: 43px;
  flex: none;
  display: flex;
  align-items: center;
  justify-content: center;
  font-size: 14px;
  color: #1b55a3;
}
.datepicker {
  width: 464px;
  margin-left: 9px;
  display: flex;
  background: #fbfcfe;
  border: 1px solid #dcdfef;
  box-shadow: 0 1px 2px rgba(52,55,65,.12);
  align-items: stretch;
}
.dateval {
  flex: 1;
  padding-left: 8px;
  display: flex;
  align-items: center;
  font-size: 14px;
  color: #343741;
}
.showdates {
  display: flex;
  align-items: center;
  font-size: 14px;
  color: #1b55a3;
  padding-right: 8px;
}
.refresh {
  width: 118px;
  margin-left: 16px;
  background: #1b55a3;
  border: 0;
  border-radius: 4px;
  color: #fff;
  font: 400 15.500px Inter, sans-serif;
  display: flex;
  align-items: center;
  justify-content: center;
  gap: 10px;
  padding: 0;
  box-shadow: 0 2px 2px rgba(27,85,163,.25);
}
.refresh svg { width: 13px; height: 14px; }
.filterbar {
  height: 44px;
  flex: none;
  padding: 0 0 6px 12px;
  display: flex;
  align-items: center;
  font-size: 14px;
  color: #1b55a3;
}
.filterbar svg { width: 16px; height: 16px; }
.filterdash { width: 9px; height: 1px; background: #c4c9d4; margin: 0 10px 0 6px; }

.discover { flex: 1; min-height: 0; display: flex; overflow: hidden; }

/* fields sidebar */
.fields { width: 330px; flex: none; padding: 4px 4px 0 8px; overflow: hidden; }
.indexrow { height: 24px; display: flex; align-items: center; padding-left: 1px; }
.indexname { font-size: 15.600px; font-weight: 600; color: #1a1c21; white-space: nowrap; letter-spacing: -.1px; }
.indexchev { width: 15px; height: 15px; margin-left: 9px; }
.collapse {
  margin-left: auto;
  width: 14px;
  height: 14px;
  margin-top: -8px;
  border-radius: 50%;
  background: #98a2b3;
}
.collapse svg { width: 14px; height: 14px; }
.fieldsearch {
  margin: 13px 25px 0 0;
  height: 31px;
  background: #fbfcfd;
  border: 1px solid #d8dce8;
  border-radius: 2px;
  display: flex;
  align-items: center;
  padding: 0 0 1px 8px;
  font-size: 14px;
  color: #69707d;
}
.fieldsearch svg { width: 15px; height: 15px; margin-right: 8px; }
.filterfields {
  height: 40px;
  display: flex;
  align-items: center;
  padding: 0 29px 0 8px;
  font-size: 14px;
  color: #1b55a3;
}
.filterfields svg { width: 16px; height: 16px; margin-right: 8px; }
.ffbadge {
  margin-left: auto;
  width: 24px;
  height: 20px;
  background: #dde2ee;
  border-radius: 3px;
  text-align: center;
  line-height: 20px;
  font-size: 12px;
  font-weight: 500;
  color: #1a1c21;
}
.fhead {
  margin: 0;
  padding-left: 1px;
  font-size: 12px;
  line-height: 16px;
  font-weight: 700;
  color: #1a1c21;
}
.fhead.first { margin-top: 12.500px; }
.fhead.second { margin-top: 6px; }
.field {
  height: 34px;
  display: flex;
  align-items: center;
  padding-left: 6px;
  font-size: 12px;
  color: #5a6272;
  white-space: nowrap;
}
.field.src { margin-top: 6px; }
.fieldlist { margin-top: 6px; }
.ftype {
  width: 22px;
  flex: none;
  text-align: center;
  padding-right: 6px;
  font: italic 700 12px "Liberation Serif", serif;
  color: #343741;
}
.ftype.code { font: 9px "Liberation Mono", monospace; color: #98a2b3; }

/* results */
.results {
  flex: 1;
  min-width: 0;
  margin-right: 10px;
  background: #fff;
  border: 1px solid #d3dae6;
  border-bottom: 0;
  border-radius: 4px 4px 0 0;
  overflow: hidden;
}
.hits {
  margin-top: 4px;
  height: 22px;
  line-height: 22px;
  text-align: center;
  padding-left: 13px;
  font-size: 16px;
  color: #343741;
}
.hits b { font-weight: 700; color: #1a1c21; margin-right: 3px; }
.timerange {
  margin-top: 2px;
  height: 32px;
  display: flex;
  justify-content: center;
  align-items: center;
  font-size: 14.300px;
  color: #343741;
  gap: 5px;
}
.interval {
  width: 87px;
  height: 32px;
  background: #fbfcfd;
  border: 1px solid #cfd5e3;
  border-radius: 4px;
  display: flex;
  align-items: center;
  justify-content: space-between;
  padding: 0 11px 0 12px;
  font-size: 14px;
}
.interval svg { width: 13px; height: 13px; }

.chart {
  display: grid;
  grid-template-columns: 71px 1386px;
  grid-template-rows: 127px 16px 16px;
  padding-top: 17px;
  height: 208px;
}
.yaxis { display: flex; align-items: flex-start; height: 127px; }
.ytitle {
  width: 14px;
  margin-left: 8px;
  margin-top: 52px;
  writing-mode: vertical-rl;
  text-orientation: sideways;
  transform: rotate(180deg);
  font-size: 12px;
  font-weight: 700;
  line-height: 14px;
  color: #1a1c21;
}
.yticks {
  width: 29px;
  height: 137px;
  display: flex;
  flex-direction: column-reverse;
  font-size: 10px;
  color: #69707d;
  text-align: right;
}
.yticks span { height: 21.900px; line-height: 21.900px; }
.plot {
  position: relative;
  display: flex;
  align-items: flex-end;
  height: 127px;
}
.plot i {
  flex: 1;
  background: #48a888;
  border-top: 1px solid #a5d5c4;
  border-right: 1px solid #cbe7dd;
}
.bound {
  position: absolute;
  top: 0;
  bottom: 0;
  background: rgba(90,97,110,.25);
}
.bound.left { left: 0; width: 13px; }
.bound.right { right: 0; width: 12px; }
.nowline {
  position: absolute;
  top: 0;
  bottom: 0;
  right: 11px;
  width: 1px;
  background: #bd271e;
  opacity: .75;
}
.xticks {
  grid-column: 1 / 3;
  margin-top: 16px;
  padding-left: 46.400px;
  display: flex;
  font-size: 10px;
  line-height: 16px;
  color: #69707d;
}
.xticks span { width: 97.260px; flex: none; text-align: center; white-space: nowrap; }
.xtitle {
  grid-column: 1 / 3;
  margin-top: 22px;
  padding-left: 69px;
  text-align: center;
  font-size: 12px;
  font-weight: 700;
  line-height: 16px;
  color: #343741;
}
.thead {
  height: 30px;
  border-bottom: 1px solid #d3dae6;
  display: flex;
  align-items: center;
  font-size: 12px;
  font-weight: 700;
  color: #1a1c21;
  padding-left: 32.500px;
}
.thtime { width: 207.500px; display: flex; align-items: center; gap: 3px; }
.sortarrow {
  width: 0;
  height: 0;
  margin-top: 4px;
  border-left: 3.500px solid transparent;
  border-right: 3.500px solid transparent;
  border-top: 4px solid #1b55a3;
}
.row {
  display: flex;
  padding: 9px 0 5.670px 0;
  border-bottom: 1px solid #d3dae6;
  font-family: "DejaVu Sans Mono", monospace;
  font-size: 11.850px;
  color: #343741;
}
.expand { width: 11px; height: 12px; margin: 2px 0 0 6px; flex: none; }
.rtime { width: 207.500px; margin-left: 15.500px; margin-top: -4px; line-height: 24px; white-space: nowrap; flex: none; }
.src { flex: 1; min-width: 0; line-height: 24px; }
.src > div { white-space: nowrap; height: 24px; }
.k {
  background: #e4ebf4;
  padding: 3px 4px;
  margin-right: 4px;
  border-radius: 4px;
}

/* overlays */
.activate {
  position: absolute;
  left: 1644px;
  top: 904px;
  color: rgba(120,120,120,.6);
  white-space: nowrap;
}
.act1 { font-size: 21px; line-height: 26px; }
.act2 { font-size: 14px; line-height: 20px; margin-top: 3px; }
.csdn {
  position: absolute;
  left: 1792px;
  top: 984px;
  font-size: 16.500px;
  line-height: 20px;
  color: rgba(120,120,120,.6);
  white-space: nowrap;
}
```
